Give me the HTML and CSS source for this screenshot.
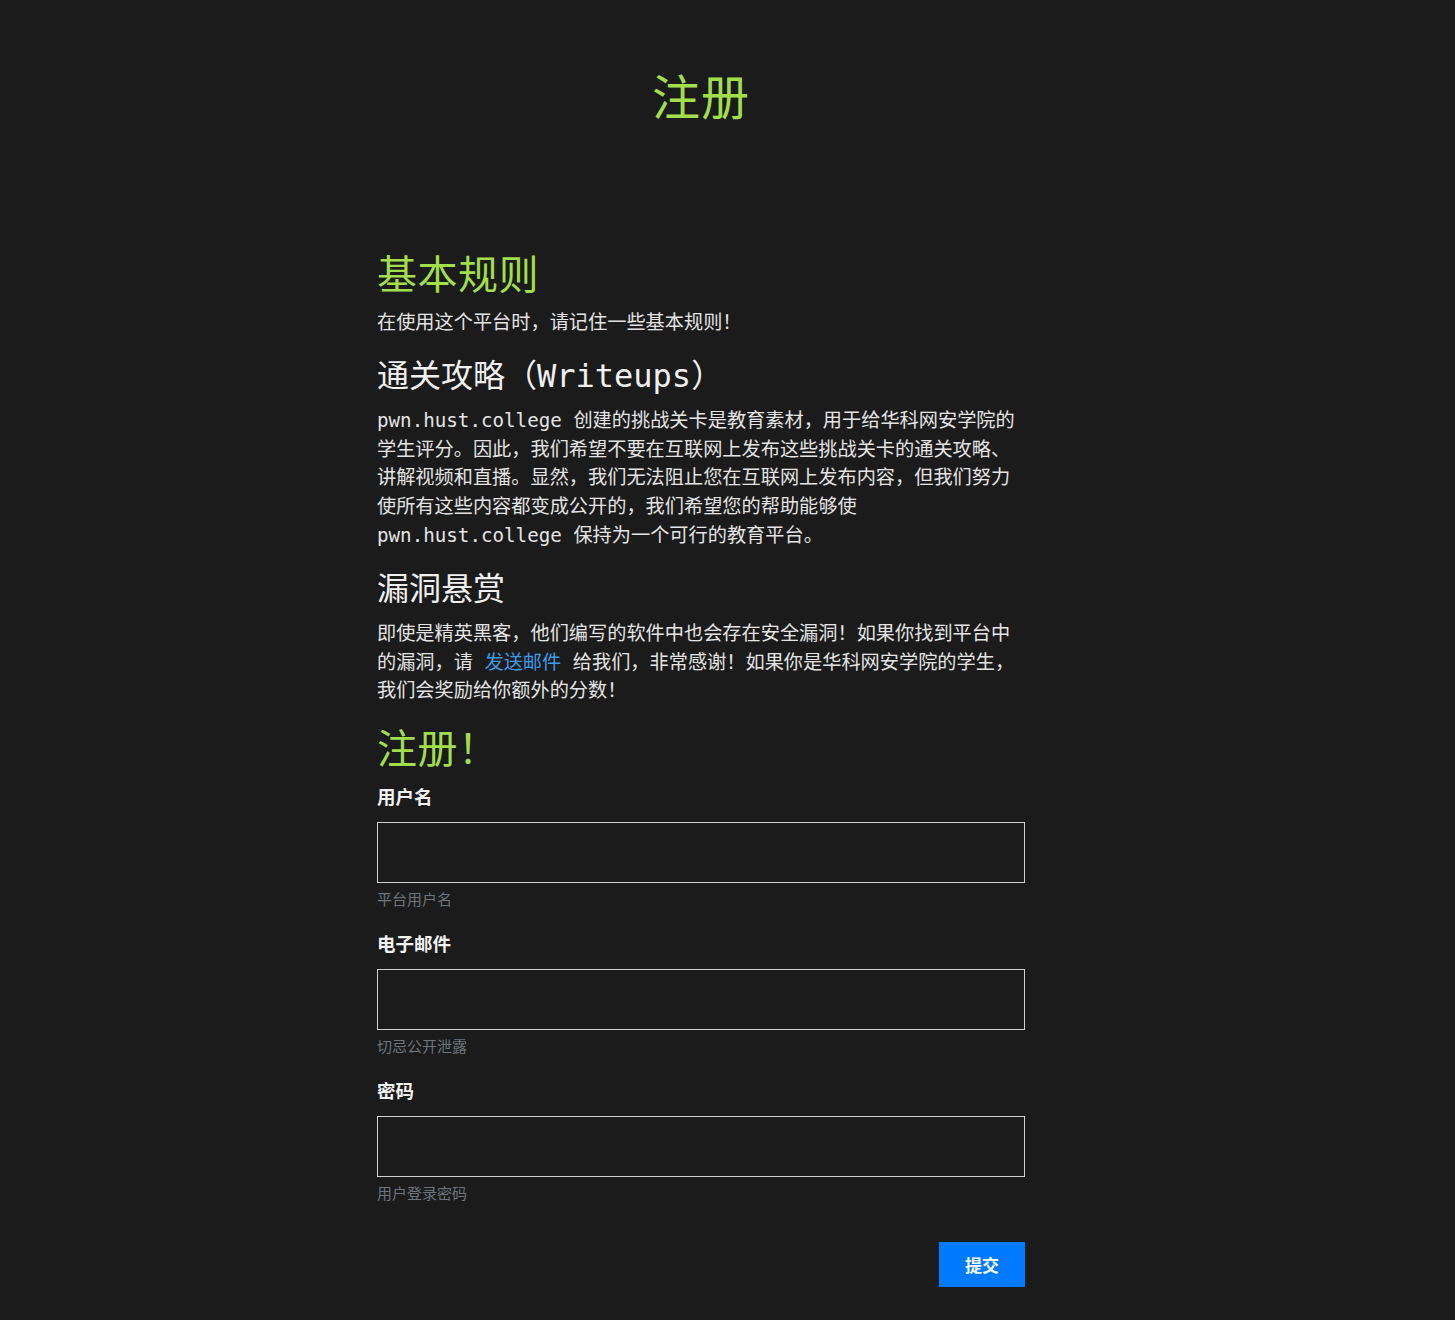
FILE: index.html
```html
<!DOCTYPE html>
<html lang="zh">
<head>
<meta charset="utf-8">
<title>注册</title>
<link rel="stylesheet" href="styles.css">
</head>
<body>
<main class="page">
  <header class="hero">
    <h1 class="hero-title">注册</h1>
  </header>
  <section class="content">
    <h2 class="green-title">基本规则</h2>
    <p class="para">在使用这个平台时，请记住一些基本规则！</p>

    <h3 class="sub-title">通关攻略（Writeups）</h3>
    <p class="para">pwn.hust.college 创建的挑战关卡是教育素材，用于给华科网安学院的学生评分。因此，我们希望不要在互联网上发布这些挑战关卡的通关攻略、讲解视频和直播。显然，我们无法阻止您在互联网上发布内容，但我们努力使所有这些内容都变成公开的，我们希望您的帮助能够使 pwn.hust.college 保持为一个可行的教育平台。</p>

    <h3 class="sub-title">漏洞悬赏</h3>
    <p class="para">即使是精英黑客，他们编写的软件中也会存在安全漏洞！如果你找到平台中的漏洞，请 <a class="link" href="#">发送邮件</a> 给我们，非常感谢！如果你是华科网安学院的学生，我们会奖励给你额外的分数！</p>

    <h2 class="green-title signup">注册！</h2>
    <form class="form">
      <div class="form-group">
        <label class="label" for="name">用户名</label>
        <input class="input" id="name" type="text">
        <small class="help">平台用户名</small>
      </div>
      <div class="form-group">
        <label class="label" for="email">电子邮件</label>
        <input class="input" id="email" type="email">
        <small class="help">切忌公开泄露</small>
      </div>
      <div class="form-group">
        <label class="label" for="password">密码</label>
        <input class="input" id="password" type="password">
        <small class="help">用户登录密码</small>
      </div>
      <div class="actions">
        <button class="btn" type="button">提交</button>
      </div>
    </form>
  </section>
</main>
</body>
</html>
```

FILE: styles.css
```css
html, body {
  margin: 0;
  padding: 0;
  background: #1b1b1b;
}

body {
  color: #e4e4e4;
  font-family: "DejaVu Sans Mono", "Noto Sans CJK SC", monospace;
}

.page {
  width: 648px;
  margin-left: 377px;
  padding-bottom: 32px;
}

.hero {
  padding-top: 69px;
  height: 251px;
  box-sizing: border-box;
  text-align: center;
}

.hero-title {
  margin: 0;
  font-size: 48px;
  line-height: 58px;
  font-weight: 400;
  color: #a2de4c;
  letter-spacing: 1px;
}

.green-title {
  margin: 0 0 10px;
  font-size: 40px;
  line-height: 48px;
  font-weight: 400;
  color: #a2de4c;
  letter-spacing: 0.5px;
}

.green-title.signup {
  margin-top: 0;
  margin-bottom: 9px;
}

.sub-title {
  margin: 0 0 12px;
  font-size: 32px;
  line-height: 38px;
  font-weight: 400;
  color: #f0f0f0;
}

.para {
  margin: 0 0 19px;
  font-size: 19.2px;
  line-height: 28.8px;
}

.link {
  color: #3d9be9;
  text-decoration: none;
}

.form {
  display: flex;
  flex-direction: column;
}

.form-group {
  display: flex;
  flex-direction: column;
  margin-bottom: 19px;
}

.label {
  font-family: "Noto Sans CJK SC", "Noto Sans", sans-serif;
  font-weight: 700;
  font-size: 18.5px;
  line-height: 28px;
  color: #f2f2f2;
  margin-bottom: 12px;
}

.input {
  height: 61px;
  box-sizing: border-box;
  border: 1px solid #d0d0d0;
  background: transparent;
  color: #eee;
  padding: 6px 12px;
  font-size: 18px;
  outline: none;
  margin: 0;
}

.help {
  margin-top: 4px;
  font-family: "Noto Sans CJK SC", "Noto Sans", sans-serif;
  font-size: 15px;
  line-height: 23px;
  color: #6c757d;
}

.actions {
  display: flex;
  justify-content: flex-end;
  margin-top: 19px;
}

.btn {
  width: 86px;
  height: 45px;
  border: none;
  border-radius: 0;
  background: #007bff;
  color: #fff;
  font-family: "Noto Sans CJK SC", "Noto Sans", sans-serif;
  font-weight: 700;
  font-size: 17px;
  cursor: pointer;
}
```
